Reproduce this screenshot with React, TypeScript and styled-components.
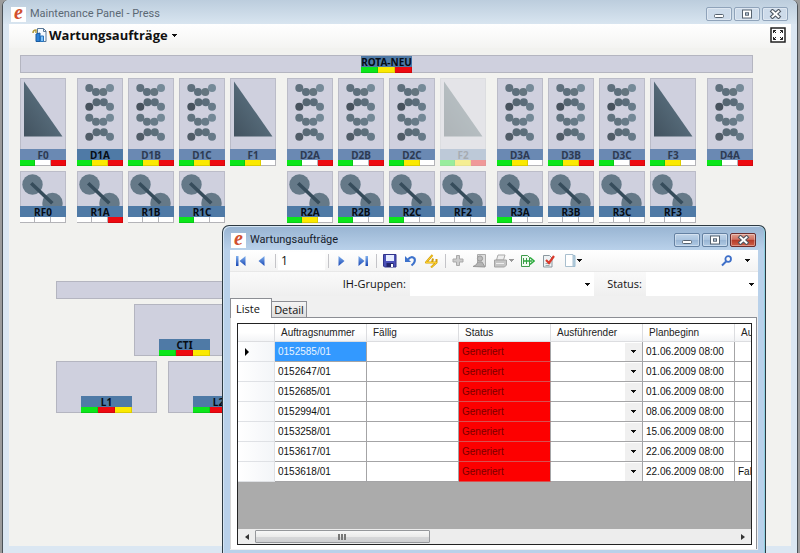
import React from "react";
import styled, { createGlobalStyle, css } from "styled-components";

const GlobalStyle = createGlobalStyle`
  * { box-sizing: border-box; }
  body { margin: 0; background: #9b9b9b; font-family: "Open Sans", "Noto Sans", sans-serif; color: #111; }
  button, input, select { font: inherit; color: inherit; }
`;

/* ---------- window frames ---------- */

const Desktop = styled.div`
  position: relative;
  display: flex;
  height: 100vh;
  min-height: 553px;
  padding: 0 2px;
  overflow: hidden;
`;

const MainWindow = styled.section`
  flex: 1;
  display: flex;
  flex-direction: column;
  border: solid #4a5157;
  border-width: 0 1px;
  border-radius: 6px 6px 0 0;
  padding: 0 6px 7px;
  background: #dbe7f2;
`;

const Dialog = styled.section`
  position: absolute;
  top: 225px;
  left: 222px;
  right: 34px;
  bottom: 0;
  display: flex;
  flex-direction: column;
  padding: 0 7px 3px;
  border: 1px solid #2d3a42;
  border-bottom: 0;
  border-radius: 7px 7px 0 0;
  background: linear-gradient(#98b4d2 0, #b9d1ea 24px, #b9d1ea 100%);
  box-shadow: inset 1px 1px 0 #d5e5f3, inset -1px 0 0 #8fd0e0;
`;

const TitleBar = styled.header<{ $active?: boolean }>`
  display: flex;
  align-items: center;
  height: 24px;
  padding: ${(p) => (p.$active ? "4px 2px 0 1px" : "4px 3px 0 2px")};
  margin: 0 ${(p) => (p.$active ? 0 : -6)}px;
  ${(p) =>
    !p.$active &&
    css`
      padding: 4px 9px 0 8px;
      border-radius: 6px 6px 0 0;
      background: linear-gradient(#bccddd, #d8e5f0);
    `}
`;

const Title = styled.h1<{ $active?: boolean }>`
  flex: 1;
  margin: 0 0 0 4px;
  font-family: Roboto, "Open Sans", sans-serif;
  font-size: 11px;
  line-height: 18px;
  font-weight: 400;
  color: ${(p) => (p.$active ? "#16202b" : "#5b6874")};
`;

const Logo = styled.span`
  display: flex;
  align-items: center;
  justify-content: center;
  width: 15px;
  height: 15px;
  padding-bottom: 4px;
  background: #fff;
  color: #d2502f;
  font: italic bold 20px/15px "Liberation Serif", serif;
`;

const WindowButtons = styled.div`
  display: flex;
  gap: 2px;
`;

const WindowButton = styled.button<{ $tone: "pale" | "blue" | "red" }>`
  display: flex;
  align-items: center;
  justify-content: center;
  width: 26px;
  height: 14px;
  padding: 0;
  border: 1px solid ${(p) => (p.$tone === "pale" ? "#8fa3ba" : p.$tone === "red" ? "#6b2d2d" : "#6481a2")};
  border-radius: 2px;
  box-shadow: inset 0 0 0 1px rgba(255, 255, 255, 0.35);
  background: ${(p) =>
    p.$tone === "pale"
      ? "#cddbea"
      : p.$tone === "red"
        ? "linear-gradient(#e0a090 0, #d07060 45%, #b53a28 50%, #cf6048 100%)"
        : "linear-gradient(#c0d4e9 0, #aac4df 50%, #98b5d4 50%, #b0cae4 100%)"};
`;

const Content = styled.div`
  flex: 1;
  display: flex;
  flex-direction: column;
  background: #f2f2ef;
`;

const MenuBar = styled.div`
  display: flex;
  align-items: center;
  justify-content: space-between;
  height: 24px;
  padding: 0 5px 0 23px;
  background: linear-gradient(#fff, #f4f4f2);
`;

const MenuButton = styled.button`
  display: flex;
  align-items: center;
  padding: 0 0 2px;
  border: 0;
  background: none;
  font-size: 13px;
  line-height: 20px;
  font-weight: 700;
  color: #111;
  svg + span { margin: 0 4px 0 1px; }
`;

const PlainButton = styled.button`
  display: flex;
  padding: 0 0 2px;
  border: 0;
  background: none;
`;

/* ---------- machine board ---------- */

const Board = styled.div`
  display: flex;
  flex-direction: column;
  padding: 7px 38px 0 11px;
`;

const bevel = css`
  background: #cfd0de;
  box-shadow: inset 0 0 0 1px #b4b5c0;
`;

const Beam = styled.div`
  ${bevel}
  display: flex;
  align-items: flex-end;
  justify-content: center;
  height: 18px;
`;

const UnitRow = styled.div`
  display: flex;
  gap: 11px;
  margin-top: 5px;
`;

const UnitGroup = styled.div<{ $span: number }>`
  flex: ${(p) => p.$span} 1 0;
  display: flex;
  gap: 5px;
`;

const Unit = styled.div<{ $tall?: boolean; $faded?: boolean; $empty?: boolean }>`
  flex: 1 1 0;
  min-width: 0;
  display: flex;
  flex-direction: column;
  align-items: center;
  height: ${(p) => (p.$tall ? 88 : 52)}px;
  opacity: ${(p) => (p.$faded ? 0.38 : 1)};
  visibility: ${(p) => (p.$empty ? "hidden" : "visible")};
  background: #cfd0de;
  box-shadow: inset 0 0 0 1px #bbbcc8;
`;

const UnitPicture = styled.div`
  flex: 1;
  min-height: 0;
  overflow: hidden;
  svg { display: block; }
`;

const Plate = styled.div`
  width: 100%;
`;

const PlateName = styled.div<{ $dim?: boolean }>`
  height: 11px;
  font-family: "Noto Sans", sans-serif;
  font-size: 10px;
  line-height: 12px;
  font-weight: 700;
  text-align: center;
  white-space: nowrap;
  color: ${(p) => (p.$dim ? "#2d3a52" : "#060c14")};
  background: ${(p) => (p.$dim ? "#6a89b3" : "#4f7aa6")};
`;

const Lights = styled.div`
  display: flex;
  height: 6px;
`;

const colors: Record<string, string> = { g: "#0be61a", y: "#fbe900", r: "#ee0a10", w: "#fff" };

const Light = styled.span<{ $c: string }>`
  flex: 1;
  background: ${(p) => colors[p.$c]};
  border: solid ${(p) => (p.$c === "w" ? "#b4b4b8" : "rgba(0,0,0,0.12)")};
  border-width: 0 1px 1px 0;
`;

const SmallPlate = styled.div`
  width: 51px;
`;

const Delivery = styled.div`
  display: flex;
  flex-direction: column;
  margin: 58px 100px 0 36px;
`;

const TileRow = styled.div<{ $indent?: boolean }>`
  display: flex;
  gap: 11px;
  margin-top: 5px;
  padding-left: ${(p) => (p.$indent ? 78 : 0)}px;
`;

const Tile = styled.div`
  ${bevel}
  display: flex;
  align-items: flex-end;
  justify-content: center;
  width: 101px;
  height: 52px;
`;

/* ---------- dialog ---------- */

const DialogBody = styled.div`
  flex: 1;
  display: flex;
  flex-direction: column;
  min-height: 0;
  background: #f0f0f0;
`;

const ToolBar = styled.div`
  display: flex;
  align-items: center;
  height: 22px;
  background: linear-gradient(#fff, #f3f3f3);
  border-bottom: 1px solid #e8e8e8;
`;

const ToolButton = styled.button<{ $split?: boolean }>`
  display: flex;
  align-items: center;
  justify-content: center;
  gap: 1px;
  width: ${(p) => (p.$split ? 27 : 21)}px;
  height: 21px;
  padding: 0;
  border: 0;
  background: none;
`;

const Separator = styled.span`
  width: 6px;
  height: 14px;
  background: linear-gradient(#c4c4c8, #c4c4c8) center / 1px 100% no-repeat;
`;

const PageInput = styled.input`
  width: 47px;
  height: 18px;
  padding: 0 0 0 3px;
  border: 0;
  background: #fff;
  font-size: 12px;
`;

const Spacer = styled.span`
  flex: 1;
`;

const FilterBar = styled.form`
  display: flex;
  height: 24px;
  background: linear-gradient(#fafafa, #efefef);
`;

const FilterLabel = styled.label<{ $w: number }>`
  width: ${(p) => p.$w}px;
  padding-right: 4px;
  text-align: right;
  font-size: 11px;
  line-height: 24px;
`;

const SelectBox = styled.span<{ $grow: number }>`
  position: relative;
  flex: ${(p) => p.$grow} 1 0;
  background: #fff;
  svg { position: absolute; right: 4px; top: 11px; pointer-events: none; }
`;

const Select = styled.select`
  display: block;
  width: 100%;
  height: 100%;
  padding: 0;
  border: 0;
  appearance: none;
  background: transparent;
`;

const Tabs = styled.div`
  display: flex;
  align-items: flex-end;
  height: 21px;
`;

const Tab = styled.button<{ $on?: boolean }>`
  width: ${(p) => (p.$on ? 42 : 35)}px;
  height: ${(p) => (p.$on ? 20 : 16)}px;
  padding: 0 ${(p) => (p.$on ? 6 : 0)}px 0 0;
  border: 1px solid #8c8e94;
  border-bottom-width: 0;
  border-left-width: ${(p) => (p.$on ? 1 : 0)}px;
  margin-bottom: ${(p) => (p.$on ? -1 : 0)}px;
  z-index: 1;
  background: ${(p) => (p.$on ? "#fff" : "linear-gradient(#f4f4f4, #dedede)")};
  font-size: 11px;
  line-height: 15px;
  text-align: center;
`;

const TabPanel = styled.div`
  flex: 1;
  display: flex;
  min-height: 0;
  margin: 0 1px 1px 0;
  padding: 5px 4px 4px 6px;
  border: 1px solid #8c8e94;
  border-left-color: #d8d8d8;
  border-bottom: 0;
  background: #fff;
`;

const GridFrame = styled.div`
  flex: 1;
  display: flex;
  flex-direction: column;
  min-width: 0;
  border: 1px solid #222;
  background: #ababab;
`;

const GridView = styled.div`
  flex: 1;
  min-height: 0;
  overflow: hidden;
`;

const Table = styled.table`
  width: 589px;
  table-layout: fixed;
  border-collapse: separate;
  border-spacing: 0;
  font-family: "Liberation Sans", Arial, sans-serif;
  font-size: 10px;
  line-height: 12px;
  white-space: nowrap;
`;

const HeadCell = styled.th<{ $w: number }>`
  width: ${(p) => p.$w}px;
  height: 18px;
  padding: 1px 0 0 6px;
  text-align: left;
  font-weight: 400;
  color: #222;
  background: linear-gradient(#fff 50%, #f3f4f6);
  border: solid #dcdde0;
  border-width: 0 1px 1px 0;
`;

const Cell = styled.td<{ $kind?: "mark" | "selected" | "alert" }>`
  height: 20px;
  padding: 1px 0 0 3px;
  background: #fff;
  color: #111;
  border: solid #a4a4a6;
  border-width: 0 1px 1px 0;
  ${(p) =>
    p.$kind === "mark" &&
    css`
      padding-left: 6px;
      background: linear-gradient(90deg, #fff, #f3f5f8);
      border-color: #dfe1e5;
    `}
  ${(p) => p.$kind === "selected" && css`background: #3399ff; color: #e8f4ff;`}
  ${(p) => p.$kind === "alert" && css`background: #fd0000; color: #7a0000; border-bottom-color: #d85050;`}
  svg { display: block; }
`;

const CellSelect = styled.div`
  display: flex;
  position: relative;
  height: 18px;
  background: linear-gradient(#f0f0f0, #f0f0f0) right / 17px 100% no-repeat;
  svg { position: absolute; right: 6px; top: 7px; pointer-events: none; }
`;

const ScrollBar = styled.div`
  display: grid;
  grid-template-columns: 17px minmax(0, 35fr) minmax(0, 61fr) 17px;
  height: 15px;
  background: #ededed;
`;

const ScrollButton = styled.button`
  display: flex;
  align-items: center;
  justify-content: center;
  padding: 0;
  border: 0;
  background: none;
`;

const Thumb = styled.button`
  display: flex;
  align-items: center;
  justify-content: center;
  margin: 1px 0;
  padding: 0;
  border: 1px solid #95979b;
  border-radius: 1px;
  background: linear-gradient(#f7f7f7 0, #ebebeb 50%, #d8d8da 50%, #cfd0d2 100%);
`;

/* ---------- drawings ---------- */

const Caret = ({ color = "#111" }: { color?: string }) => (
  <svg width="5" height="3" viewBox="0 0 5 3" shapeRendering="crispEdges">
    <path d="M0 0h5v1h-1v1h-1v1h-1v-1h-1v-1h-1z" fill={color} />
  </svg>
);

const MinimizeIcon = () => (
  <svg width="12" height="10"><rect x="1.5" y="5.5" width="9" height="3" rx="1" fill="#fff" stroke="#56626f" /></svg>
);
const MaximizeIcon = () => (
  <svg width="12" height="10">
    <rect x="1.5" y="1" width="9" height="8" fill="#fff" stroke="#56626f" />
    <rect x="4.5" y="3.8" width="3" height="2.4" fill="#c4d4e5" stroke="#56626f" />
  </svg>
);
const CloseIcon = () => (
  <svg width="13" height="10" strokeLinecap="square">
    <path d="M3.5 2.3l6 5.4M9.5 2.3l-6 5.4" stroke="#4d5661" strokeWidth="4" />
    <path d="M3.5 2.3l6 5.4M9.5 2.3l-6 5.4" stroke="#fff" strokeWidth="2" />
  </svg>
);

const OrdersIcon = () => (
  <svg width="16" height="16">
    <path d="M5.500 1.500h6l2.500 2.500v10.500h-8.500z" fill="#f4faff" stroke="#5a7896" />
    <path d="M11.500 1.500v3h2.500" fill="none" stroke="#5a7896" />
    <path d="M4 7l4-1v8.500h-4z" fill="#2f82d6" stroke="#195a9e" />
    <path d="M8.500 9h3v5.500h-3z" fill="#7dc0f5" stroke="#2673bd" />
    <path d="M1 6q0-3 3-3v3" fill="none" stroke="#b29a3a" strokeWidth="1.500" />
  </svg>
);

const FullscreenIcon = () => (
  <svg width="16" height="16" fill="none" stroke="#222">
    <rect x="1" y="1" width="14" height="14" fill="#fff" strokeWidth="1.500" />
    <path d="M3.500 6v-2.500h2.500M10 3.500h2.500v2.500M12.500 10v2.500h-2.500M6 12.500h-2.500v-2.500M3.500 3.500l3 3M12.500 3.500l-3 3M12.500 12.500l-3-3M3.500 12.500l3-3" />
    <rect x="6" y="6" width="4" height="4" fill="#fff" stroke="none" />
  </svg>
);

const Gradients = () => (
  <svg width="0" height="0" style={{ position: "absolute" }} aria-hidden="true">
    <defs>
      <linearGradient id="steel" x1="0" y1="1" x2="1" y2="0">
        <stop offset="0" stopColor="#42525f" />
        <stop offset="1" stopColor="#667f8f" />
      </linearGradient>
      <linearGradient id="blue" x1="0" y1="0" x2="0" y2="1">
        <stop offset="0" stopColor="#7fb0ee" />
        <stop offset="1" stopColor="#1947b4" />
      </linearGradient>
    </defs>
  </svg>
);

const FolderPicture = () => (
  <svg width="46" height="71"><path d="M4 3.500v55h38.500z" fill="url(#steel)" /></svg>
);

const rollers: [number, number, string][] = [
  [12.3, 10, "#5f707d"], [19, 14, "#5d6f7c"], [26.3, 14, "#64757f"], [33, 10, "#758a98"],
  [12.3, 28.7, "#47525d"], [19.5, 24.3, "#566773"], [26.8, 24.3, "#5b6d7a"], [33, 28.7, "#687b89"],
  [12.3, 39.7, "#61737f"], [19, 43.7, "#61737f"], [26.3, 43.7, "#687b88"], [33, 39.7, "#738896"],
  [12.3, 58.7, "#505c67"], [19.5, 54.3, "#596a76"], [26.8, 54.3, "#5c6f7b"], [33, 58.7, "#677a88"],
];
const TowerPicture = () => (
  <svg width="46" height="71">
    {rollers.map(([x, y, c]) => <circle key={`${x}-${y}`} cx={x} cy={y} r="4" fill={c} />)}
  </svg>
);

const ReelPicture = () => (
  <svg width="46" height="35">
    <circle cx="12.500" cy="13.500" r="10.200" fill="#657988" />
    <circle cx="32.500" cy="32" r="10.200" fill="#657988" />
    <path d="M12.500 13.500L31 31" stroke="#364c5b" strokeWidth="3.600" strokeLinecap="square" />
  </svg>
);

const FirstIcon = () => (
  <svg width="12" height="12"><path d="M1 1h2.500v10h-2.500zM10.500 1v10l-6-5z" fill="url(#blue)" /></svg>
);
const PrevIcon = () => (
  <svg width="12" height="12"><path d="M8.500 1v10l-6-5z" fill="url(#blue)" /></svg>
);
const NextIcon = () => (
  <svg width="12" height="12"><path d="M2.500 1v10l6-5z" fill="url(#blue)" /></svg>
);
const LastIcon = () => (
  <svg width="12" height="12"><path d="M8.500 1h2.500v10h-2.500zM1.500 1v10l6-5z" fill="url(#blue)" /></svg>
);
const SaveIcon = () => (
  <svg width="14" height="14">
    <path d="M.5.5h12.500v12.500h-11.500l-1-1z" fill="#4a50b8" stroke="#30338a" />
    <rect x="3" y="1" width="8" height="6" fill="#e6ecff" />
    <rect x="3.500" y="9" width="7" height="4" fill="#23256c" />
    <rect x="8" y="10" width="2" height="3" fill="#fff" />
  </svg>
);
const UndoIcon = () => (
  <svg width="14" height="14">
    <path d="M4 5.500Q7.500 1.500 10.500 4.500Q12 8 7.500 11.500" fill="none" stroke="#3d72cc" strokeWidth="2.200" />
    <path d="M1 2v6h6z" fill="#3d72cc" />
  </svg>
);
const BoltIcon = () => (
  <svg width="15" height="14" fill="none" strokeLinejoin="round">
    <path d="M8.500 1L2 8.500h4.500M8 8.500l1-4M6 8.500h6.500L7 13.500M12.500 5v3.500" stroke="#d39d08" strokeWidth="2" />
    <path d="M8.500 1L2 8.500h4.500M6 8.500h6.500L7 13.500" stroke="#fbd02c" />
  </svg>
);
const PlusIcon = () => (
  <svg width="13" height="13"><path d="M4.500 1.500h3v3.500h3.500v3h-3.500v3.500h-3v-3.500h-3.500v-3h3.500z" fill="#ccc" stroke="#a9a9a9" /></svg>
);
const PersonIcon = () => (
  <svg width="15" height="14">
    <path d="M5.500.5h8v12h-8z" fill="#ddd" stroke="#aaa" />
    <circle cx="8" cy="4.500" r="2.600" fill="#bbb" stroke="#999" />
    <path d="M1 12.500l3-1.500 2-3h4l3 5z" fill="#b4b4b4" stroke="#999" />
  </svg>
);
const PrintIcon = () => (
  <svg width="15" height="14">
    <path d="M5 1h7l-1.500 5h-7z" fill="#eee" stroke="#aaa" />
    <path d="M1.500 6h12v5l-2 2h-10z" fill="#c4c4c4" stroke="#a4a4a4" />
    <path d="M3 9.500h8" stroke="#eee" />
  </svg>
);
const ExportIcon = () => (
  <svg width="15" height="14">
    <path d="M1.500 1.500h6l2 2v9h-8z" fill="#f2fbf2" stroke="#3f9a4b" />
    <path d="M3.500 4v6M6.500 4v6" stroke="#3f9a4b" />
    <path d="M4 7h8M10 3.500l4 3.500-4 3.500" fill="none" stroke="#2bab3c" strokeWidth="1.600" />
  </svg>
);
const CheckIcon = () => (
  <svg width="14" height="14">
    <path d="M1.500 1.500h6l2.500 2.500v9h-8.500z" fill="#eef2f4" stroke="#8b979f" />
    <path d="M3.500 9.500h5M3.500 11.500h4" stroke="#9aa" />
    <path d="M4 6l3 3 5-7" fill="none" stroke="#d8392b" strokeWidth="2.200" />
  </svg>
);
const PageIcon = () => (
  <svg width="12" height="14">
    <path d="M3.500 1.500h7.500v11h-7.500z" fill="#b4cfe0" stroke="#9dbdd1" />
    <path d="M1.500.5h7.500v12h-7.500z" fill="#fff" stroke="#a9bfce" />
  </svg>
);
const SearchIcon = () => (
  <svg width="12" height="12" fill="none" stroke="#3e6fc8">
    <circle cx="7.200" cy="4" r="2.800" strokeWidth="1.800" />
    <path d="M5 6.500l-4 4" strokeWidth="2" />
  </svg>
);
const RowMarker = () => (
  <svg width="6" height="8"><path d="M1 0v8l4-4z" fill="#000" /></svg>
);
const Grip = () => (
  <svg width="8" height="6" shapeRendering="crispEdges"><path d="M0 0h2v6h-2zM3 0h2v6h-2zM6 0h2v6h-2z" fill="#777" /></svg>
);
const ScrollArrow = ({ right }: { right?: boolean }) => (
  <svg width="4" height="6"><path d={right ? "M0 0v6l4-3z" : "M4 0v6l-4-3z"} fill="#333" /></svg>
);

/* ---------- data ---------- */

type UnitData = { name: string; kind: "folder" | "tower" | "reel"; lights: string; strong?: boolean; faded?: boolean };

const folder = (name: string, lights: string, faded = false): UnitData => ({ name, kind: "folder", lights, faded });
const tower = (name: string, lights: string, strong = false): UnitData => ({ name, kind: "tower", lights, strong });
const reel = (name: string, lights = "www"): UnitData => ({ name, kind: "reel", lights, strong: true });

const topRow: UnitData[][] = [
  [folder("F0", "gwr")],
  [tower("D1A", "gyr", true), tower("D1B", "gyr"), tower("D1C", "gyr"), folder("F1", "gyw")],
  [tower("D2A", "gwr"), tower("D2B", "gwr"), tower("D2C", "gyw"), folder("F2", "gyr", true)],
  [tower("D3A", "gyw"), tower("D3B", "gyr"), tower("D3C", "gwr"), folder("F3", "gyw")],
  [tower("D4A", "gwr")],
];

const reelRow: (UnitData | null)[][] = [
  [reel("RF0")],
  [reel("R1A", "wwr"), reel("R1B"), reel("R1C", "gww"), null],
  [reel("R2A", "gyw"), reel("R2B", "gww"), reel("R2C", "gww"), reel("RF2")],
  [reel("R3A", "gww"), reel("R3B"), reel("R3C"), reel("RF3")],
  [null],
];

const orders = [
  ["0152585/01", "01.06.2009 08:00", ""],
  ["0152647/01", "01.06.2009 08:00", ""],
  ["0152685/01", "01.06.2009 08:00", ""],
  ["0152994/01", "08.06.2009 08:00", ""],
  ["0153258/01", "15.06.2009 08:00", ""],
  ["0153617/01", "22.06.2009 08:00", ""],
  ["0153618/01", "22.06.2009 08:00", "Fal"],
];

const pictures = { folder: FolderPicture, tower: TowerPicture, reel: ReelPicture };

const NamePlate = ({ name, lights, dim }: { name: string; lights: string; dim?: boolean }) => (
  <>
    <PlateName $dim={dim}>{name}</PlateName>
    <Lights>{lights.split("").map((c, i) => <Light key={i} $c={c} />)}</Lights>
  </>
);

const Units = ({ groups, tall }: { groups: (UnitData | null)[][]; tall?: boolean }) => (
  <UnitRow>
    {groups.map((group, g) => (
      <UnitGroup key={g} $span={group.length * 46 + (group.length - 1) * 5}>
        {group.map((unit, i) => {
          if (!unit) return <Unit key={i} $tall={tall} $empty />;
          const Picture = pictures[unit.kind];
          return (
            <Unit key={i} $tall={tall} $faded={unit.faded}>
              <UnitPicture><Picture /></UnitPicture>
              <Plate><NamePlate name={unit.name} lights={unit.lights} dim={!unit.strong} /></Plate>
            </Unit>
          );
        })}
      </UnitGroup>
    ))}
  </UnitRow>
);

const Controls = ({ active }: { active?: boolean }) => (
  <WindowButtons>
    <WindowButton $tone={active ? "blue" : "pale"} aria-label="Minimieren"><MinimizeIcon /></WindowButton>
    <WindowButton $tone={active ? "blue" : "pale"} aria-label="Maximieren"><MaximizeIcon /></WindowButton>
    <WindowButton $tone={active ? "red" : "pale"} aria-label="Schließen"><CloseIcon /></WindowButton>
  </WindowButtons>
);

const columns = ["Auftragsnummer", "Fällig", "Status", "Ausführender", "Planbeginn", "Au"];

export default function App() {
  return (
    <Desktop>
      <GlobalStyle />
      <Gradients />
      <MainWindow>
        <TitleBar>
          <Logo>e</Logo>
          <Title>Maintenance Panel - Press</Title>
          <Controls />
        </TitleBar>
        <Content>
          <MenuBar>
            <MenuButton><OrdersIcon /><span>Wartungsaufträge</span><Caret /></MenuButton>
            <PlainButton aria-label="Vollbild"><FullscreenIcon /></PlainButton>
          </MenuBar>
          <Board>
            <Beam><SmallPlate><NamePlate name="ROTA-NEU" lights="gyr" /></SmallPlate></Beam>
            <Units groups={topRow} tall />
            <Units groups={reelRow} />
            <Delivery>
              <Beam />
              <TileRow $indent>
                <Tile><SmallPlate><NamePlate name="CTI" lights="gry" /></SmallPlate></Tile>
              </TileRow>
              <TileRow>
                <Tile><SmallPlate><NamePlate name="L1" lights="gry" /></SmallPlate></Tile>
                <Tile><SmallPlate><NamePlate name="L2" lights="gry" /></SmallPlate></Tile>
              </TileRow>
            </Delivery>
          </Board>
        </Content>
      </MainWindow>

      <Dialog role="dialog" aria-labelledby="orders-title">
        <TitleBar $active>
          <Logo>e</Logo>
          <Title $active id="orders-title">Wartungsaufträge</Title>
          <Controls active />
        </TitleBar>
        <DialogBody>
          <ToolBar>
            <ToolButton aria-label="Erster"><FirstIcon /></ToolButton>
            <ToolButton aria-label="Zurück"><PrevIcon /></ToolButton>
            <Separator />
            <PageInput aria-label="Position" defaultValue="1" />
            <Separator />
            <ToolButton aria-label="Weiter"><NextIcon /></ToolButton>
            <ToolButton aria-label="Letzter"><LastIcon /></ToolButton>
            <Separator />
            <ToolButton aria-label="Speichern"><SaveIcon /></ToolButton>
            <ToolButton aria-label="Rückgängig"><UndoIcon /></ToolButton>
            <ToolButton aria-label="Aktualisieren"><BoltIcon /></ToolButton>
            <Separator />
            <ToolButton aria-label="Neu" disabled><PlusIcon /></ToolButton>
            <ToolButton aria-label="Zuweisen" disabled><PersonIcon /></ToolButton>
            <ToolButton aria-label="Drucken" $split disabled><PrintIcon /><Caret color="#999" /></ToolButton>
            <ToolButton aria-label="Export"><ExportIcon /></ToolButton>
            <ToolButton aria-label="Abschließen"><CheckIcon /></ToolButton>
            <ToolButton aria-label="Ansicht" $split><PageIcon /><Caret /></ToolButton>
            <Spacer />
            <ToolButton aria-label="Suchen"><SearchIcon /></ToolButton>
            <ToolButton aria-label="Suchoptionen"><Caret /></ToolButton>
          </ToolBar>
          <FilterBar>
            <FilterLabel $w={180} htmlFor="groups">IH-Gruppen:</FilterLabel>
            <SelectBox $grow={184}><Select id="groups"><option /></Select><Caret /></SelectBox>
            <FilterLabel $w={52} htmlFor="status">Status:</FilterLabel>
            <SelectBox $grow={112}><Select id="status"><option /></Select><Caret /></SelectBox>
          </FilterBar>
          <Tabs role="tablist">
            <Tab role="tab" aria-selected="true" $on>Liste</Tab>
            <Tab role="tab" aria-selected="false">Detail</Tab>
          </Tabs>
          <TabPanel role="tabpanel">
            <GridFrame>
              <GridView>
                <Table>
                  <thead>
                    <tr>
                      <HeadCell $w={37} aria-label="Zeile" />
                      {columns.map((c) => <HeadCell key={c} $w={92}>{c}</HeadCell>)}
                    </tr>
                  </thead>
                  <tbody>
                    {orders.map(([id, start, extra], i) => (
                      <tr key={id}>
                        <Cell $kind="mark">{i === 0 && <RowMarker />}</Cell>
                        <Cell $kind={i === 0 ? "selected" : undefined}>{id}</Cell>
                        <Cell />
                        <Cell $kind="alert">Generiert</Cell>
                        <Cell>
                          <CellSelect>
                            <Select aria-label={`Ausführender ${id}`}><option /></Select>
                            <Caret />
                          </CellSelect>
                        </Cell>
                        <Cell>{start}</Cell>
                        <Cell>{extra}</Cell>
                      </tr>
                    ))}
                  </tbody>
                </Table>
              </GridView>
              <ScrollBar>
                <ScrollButton aria-label="Nach links"><ScrollArrow /></ScrollButton>
                <Thumb aria-label="Bildlauf"><Grip /></Thumb>
                <span />
                <ScrollButton aria-label="Nach rechts"><ScrollArrow right /></ScrollButton>
              </ScrollBar>
            </GridFrame>
          </TabPanel>
        </DialogBody>
      </Dialog>
    </Desktop>
  );
}
